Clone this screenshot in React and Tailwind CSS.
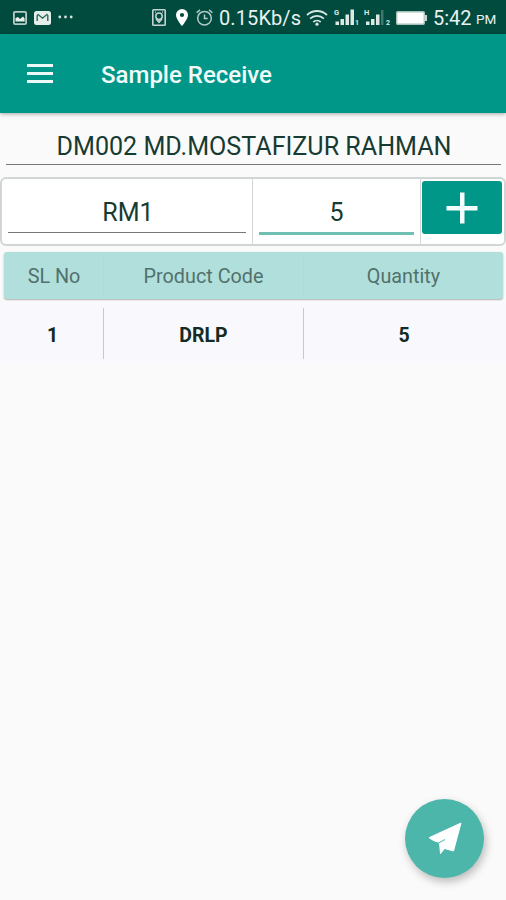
// Status bar icons
function PictureIcon() {
  return (
    <svg className="ml-[13px] mt-[11px] h-[14px] w-[14px]" viewBox="0 0 14 14">
      <rect x="0.9" y="0.9" width="12.2" height="12.2" rx="1.2" fill="none" stroke="#b9cbc6" strokeWidth="1.8" />
      <path d="M2.5 10.5V7L5 6l2 2 3-2.500 1.600 2v3z" fill="#e8f0ee" />
    </svg>
  );
}

function MailIcon() {
  return (
    <svg className="ml-[7px] mt-[11px] h-[14px] w-[17px]" viewBox="0 0 17 14">
      <rect width="17" height="14" rx="2.5" fill="#e6eeec" />
      <path d="M3.200 10V4M13.800 10V4M3.500 3l5 4.200 5-4.200" fill="none" stroke="#2c675b" strokeWidth="1.400" />
    </svg>
  );
}

function DotsIcon() {
  return (
    <svg className="ml-[7px] mt-[15px] h-[4px] w-[15px]" viewBox="0 0 15 4" fill="#d5e1de">
      <circle cx="1.800" cy="2" r="1.400" />
      <circle cx="7.500" cy="2" r="1.400" />
      <circle cx="13.200" cy="2" r="1.400" />
    </svg>
  );
}

function SafeIcon() {
  return (
    <svg className="ml-[79px] mt-[9px] h-[17px] w-[14px]" viewBox="0 0 14 17" fill="none" stroke="#c5d4d0">
      <rect x="0.800" y="0.800" width="12.400" height="15.400" rx="0.800" strokeWidth="1.600" />
      <circle cx="7" cy="7.200" r="3.200" strokeWidth="1.500" />
      <path d="M3 3.200h1M10 3.200h1M4 10l3 3.500L10 10M7 11v3" strokeWidth="1.300" />
    </svg>
  );
}

function PinIcon() {
  return (
    <svg className="ml-[10px] mt-[9px] h-[17px] w-[12px]" viewBox="0 0 12 17">
      <path
        d="M6 0a6 6 0 0 0-6 6c0 4.300 6 11 6 11s6-6.700 6-11a6 6 0 0 0-6-6zm0 8.100a2.100 2.100 0 1 1 0-4.200 2.100 2.100 0 0 1 0 4.200z"
        fill="#fff"
      />
    </svg>
  );
}

function AlarmIcon() {
  return (
    <svg className="ml-[8px] mt-[9px] h-[17px] w-[17px]" viewBox="0 0 17 17" fill="none" stroke="#b4c9c4" strokeWidth="1.500">
      <circle cx="8.500" cy="9.200" r="6.800" />
      <path d="M8.500 5.500v4h3.200M0.600 3.800L4 0.900M16.400 3.800L13 0.900" />
    </svg>
  );
}

function WifiIcon() {
  return (
    <svg className="ml-[5px] mt-[9px] h-[17px] w-[22px]" viewBox="0 0 22 17" fill="none" stroke="#dbe6e3" strokeWidth="1.800">
      <path d="M1 6a14.500 14.500 0 0 1 20 0M4.100 9.600a10 10 0 0 1 13.800 0M7.300 13a5.500 5.500 0 0 1 7.400 0" />
      <circle cx="11" cy="15.200" r="1.600" fill="#dbe6e3" stroke="none" />
    </svg>
  );
}

function SignalOne() {
  return (
    <svg className="ml-[6px] mt-[8px] h-[18px] w-[25px]" viewBox="0 0 25 18" fill="#dde8e5">
      <text x="0" y="6.500" fontSize="7.500" fontWeight="700" fontFamily="Roboto, sans-serif">G</text>
      <path d="M1.500 13.500h3.500V17H1.500zM6.500 11h3.500v6H6.500zM11.500 6.500H15V17h-3.500zM16.500 1.500H20V17h-3.500z" />
      <text x="21" y="17" fontSize="7" fontWeight="700" fontFamily="Roboto, sans-serif">1</text>
    </svg>
  );
}

function SignalTwo() {
  return (
    <svg className="ml-[5px] mt-[8px] h-[18px] w-[27px]" viewBox="0 0 27 18" fill="#dde8e5">
      <text x="0" y="6.500" fontSize="7.500" fontWeight="700" fontFamily="Roboto, sans-serif">H</text>
      <path d="M2 13.500h3.500V17H2zM7 11h3.500v6H7zM12 6.500h3.500V17H12z" />
      <path d="M17 2h2.500v15H17z" fill="#3f776c" />
      <text x="22" y="17" fontSize="7" fontWeight="700" fontFamily="Roboto, sans-serif">2</text>
    </svg>
  );
}

function BatteryIcon() {
  return (
    <svg className="ml-[5px] mt-[11px] h-[14px] w-[31px]" viewBox="0 0 31 14">
      <rect x="0.700" y="0.700" width="27.600" height="12.600" rx="1" fill="#fff" stroke="#a9bfba" strokeWidth="1.400" />
      <path d="M28.500 4H31v6h-2.500z" fill="#c5d4d0" />
    </svg>
  );
}

function StatusBar() {
  return (
    <div className="flex h-[34px] items-start whitespace-nowrap bg-[#004b3e] text-[#e9f1ef] *:shrink-0">
      <PictureIcon />
      <MailIcon />
      <DotsIcon />
      <SafeIcon />
      <PinIcon />
      <AlarmIcon />
      <span className="ml-[6px] mt-[6px] w-[82px] text-[20px] leading-[24px] tracking-[0.1px]">0.15Kb/s</span>
      <WifiIcon />
      <SignalOne />
      <SignalTwo />
      <BatteryIcon />
      <span className="ml-[6px] mt-[6px] w-[42px] text-[20px] leading-[24px]">5:42</span>
      <span className="ml-px mt-[8px] text-[13.5px] leading-[22px]">PM</span>
    </div>
  );
}

function AppBar() {
  return (
    <header className="z-10 flex h-[79px] items-center bg-[#009788] shadow-[0_1px_4px_rgba(0,0,0,0.35)]">
      <button className="ml-[27px] flex w-[26px] flex-col gap-[5px]">
        <span className="h-[3px] w-full bg-[#eefaf8]"></span>
        <span className="h-[3px] w-full bg-[#eefaf8]"></span>
        <span className="h-[3px] w-full bg-[#eefaf8]"></span>
      </button>
      <h1 className="ml-[48px] mt-[2px] text-[24px] font-medium leading-[28px] text-[#f0fbf9]">
        Sample Receive
      </h1>
    </header>
  );
}

function EntryForm() {
  return (
    <div className="mt-[12px] flex h-[69px] rounded-[6px] border-2 border-[#d1d6d5] bg-white">
      <div className="flex w-[251px] border-r border-[#d5d5d5] px-[6px]">
        <div className="mb-[11px] flex-1 border-b border-[#777] pl-[2px] pt-[18px] text-center text-[25px] leading-[32px]">
          RM1
        </div>
      </div>
      <div className="flex w-[168px] border-r border-[#d5d5d5] px-[6px]">
        <div className="mb-[9px] flex-1 border-b-[3px] border-[#6fbfb3] pt-[18px] text-center text-[25px] leading-[32px]">
          5
        </div>
      </div>
      <button className="ml-px mt-[2px] flex h-[53px] w-[80px] items-center justify-center rounded-[3px] bg-[#009788]">
        <svg className="h-[32px] w-[32px]" viewBox="0 0 32 32" fill="#f4fffd">
          <path d="M14 0.500h4.500v13.500h13v4.500h-13v13H14v-13H0.500V14H14z" />
        </svg>
      </button>
    </div>
  );
}

const rows = [{ sl: 1, code: "DRLP", quantity: 5 }];

function ProductTable() {
  return (
    <>
      <div className="ml-[4px] mr-[3px] mt-[6px] flex h-[47px] items-center rounded-[3px] bg-[#b1dfdb] text-center text-[19.8px] text-[#52716c] shadow-[0_1px_2px_rgba(0,0,0,0.3)]">
        <div className="flex h-[41px] w-[100px] items-center justify-center border-r border-[#bfd3d1] pl-px pt-[2px]">
          SL No
        </div>
        <div className="flex h-[41px] w-[200px] items-center justify-center border-r border-[#bfd3d1] pt-[2px]">
          Product Code
        </div>
        <div className="flex-1 pt-[2px]">Quantity</div>
      </div>
      {rows.map((row) => (
        <div
          key={row.sl}
          className="mt-[2px] flex h-[61px] items-center bg-[#f9f8fc] pl-[4px] pr-[3px] pt-[4px] text-center text-[19.5px] font-bold text-[#122b24]"
        >
          <div className="flex h-[51px] w-[100px] items-center justify-center border-r border-[#c9c8cc] pr-[2px] pt-[4px]">
            {row.sl}
          </div>
          <div className="flex h-[51px] w-[200px] items-center justify-center border-r border-[#c9c8cc] pt-[4px]">
            {row.code}
          </div>
          <div className="flex-1 pl-px pt-[4px]">{row.quantity}</div>
        </div>
      ))}
    </>
  );
}

export default function App() {
  return (
    <div className="relative flex h-[900px] w-[506px] flex-col overflow-hidden bg-[#fafafa] font-[Roboto,sans-serif] text-[#173b32]">
      <StatusBar />
      <AppBar />
      <div className="ml-[6px] mr-[5px] h-[52px] border-b border-[#777] pl-px pt-[18px] text-center text-[25.1px] leading-[32px]">
        DM002 MD.MOSTAFIZUR RAHMAN
      </div>
      <EntryForm />
      <ProductTable />
      <button className="absolute bottom-[22px] right-[22px] flex h-[79px] w-[79px] items-center justify-center rounded-full bg-[#4db6aa] shadow-[2px_4px_9px_rgba(0,0,0,0.25)]">
        <svg className="h-[33px] w-[34px]" viewBox="0 0 34 33">
          <path
            d="M33 1L1 15.700 5.500 18.500 11.500 20.500 12.500 31.500 16.500 26.500 25.500 29z"
            fill="#fff"
            stroke="#fff"
            strokeLinejoin="round"
          />
          <path d="M10.500 21L17 17.500" stroke="#4db6aa" strokeWidth="1" />
        </svg>
      </button>
    </div>
  );
}
